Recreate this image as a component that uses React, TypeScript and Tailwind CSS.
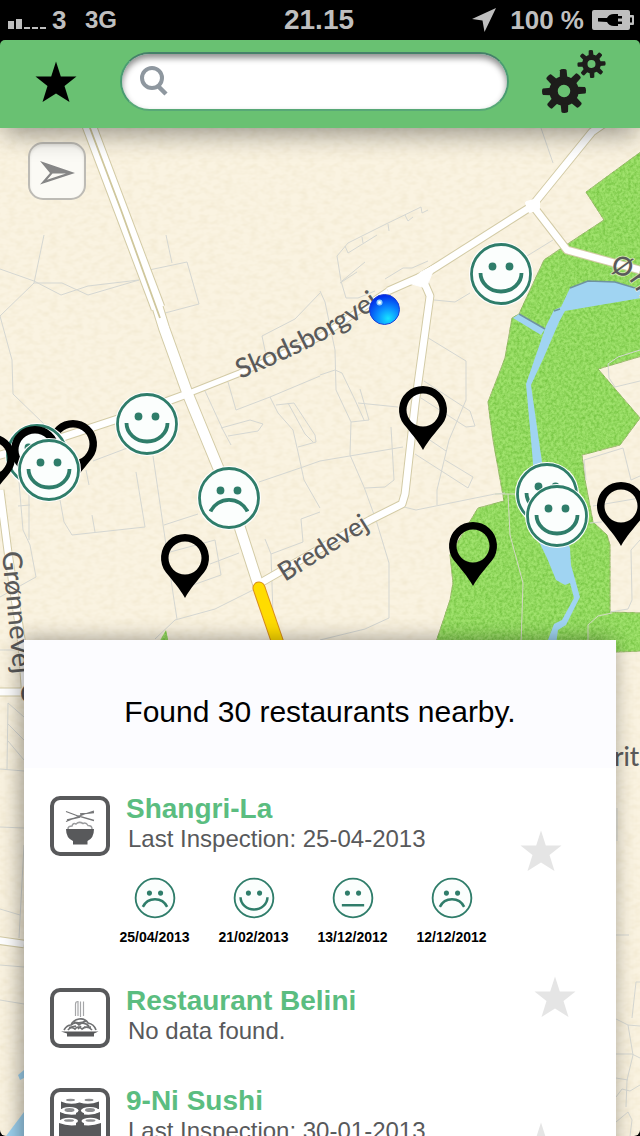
import React from "react";

type Mood = "happy" | "neutral" | "sad";
type Cuisine = "bowl" | "pasta" | "sushi";

interface Restaurant {
  name: string;
  note: string;
  cuisine: Cuisine;
  history: { mood: Mood; date: string }[];
}

const restaurants: Restaurant[] = [
  {
    name: "Shangri-La",
    note: "Last Inspection: 25-04-2013",
    cuisine: "bowl",
    history: [
      { mood: "sad", date: "25/04/2013" },
      { mood: "happy", date: "21/02/2013" },
      { mood: "neutral", date: "13/12/2012" },
      { mood: "sad", date: "12/12/2012" },
    ],
  },
  { name: "Restaurant Belini", note: "No data found.", cuisine: "pasta", history: [] },
  {
    name: "9-Ni Sushi",
    note: "Last Inspection: 30-01-2013",
    cuisine: "sushi",
    history: [{ mood: "happy", date: "30/01/2013" }],
  },
];

const mouths: Record<Mood, string> = {
  happy: "M-20.5 -1A20.5 18.5 0 0 0 20.5 -1",
  neutral: "M-17 11H17",
  sad: "M-18.5 13.5A20.5 20.5 0 0 1 18.5 13.5",
};

function Face({ mood }: { mood: Mood }) {
  return (
    <g>
      <circle r="32" fill="#fff" />
      <circle r="29.5" fill="#fbfefd" stroke="#2f7d6a" strokeWidth="2.800" />
      <circle cx="-8.500" cy="-7.500" r="3.900" fill="#2f7d6a" />
      <circle cx="8.500" cy="-7.500" r="3.900" fill="#2f7d6a" />
      <path d={mouths[mood]} fill="none" stroke="#2f7d6a" strokeWidth="3.800" />
    </g>
  );
}

function Pin() {
  return (
    <path
      fillRule="evenodd"
      d="M0 40C-5 31 -13 22 -19 14.600A24 24 0 1 1 19 14.600C13 22 5 31 0 40ZM0 -16.500A16.500 16.500 0 1 0 0 16.500A16.500 16.500 0 1 0 0 -16.500Z"
    />
  );
}

const markers: { x: number; y: number; kind: "pin" | Mood }[] = [
  { x: 73, y: 444, kind: "pin" },
  { x: 37, y: 455, kind: "happy" },
  { x: 35, y: 450, kind: "pin" },
  { x: -9, y: 458, kind: "pin" },
  { x: 49, y: 470, kind: "happy" },
  { x: 147, y: 424, kind: "happy" },
  { x: 229, y: 498, kind: "sad" },
  { x: 185, y: 558, kind: "pin" },
  { x: 423, y: 410, kind: "pin" },
  { x: 501, y: 274, kind: "happy" },
  { x: 473, y: 546, kind: "pin" },
  { x: 547, y: 494, kind: "happy" },
  { x: 557, y: 516, kind: "happy" },
  { x: 621, y: 506, kind: "pin" },
];

const paths =
  "M0 269L34 281L61 295L88 286L139 280M44 235L34 283L0 316L12 360L13 394L45 425M34 283L62 283L88 295L139 280M149 270L187 262L199 304L165 313M166 235L172 263M320 293L295 319L262 336L266 355M228 382L236 410L270 397L320 376M205 391L223 430L231 445M221 428L250 420L263 424L258 431L228 436M270 397L278 413L293 430L298 452L304 480L320 508M276 405L294 403L315 435L316 442L298 447M288 403L305 434L313 442M259 482L303 467L320 461L403 447M153 456L166 545L174 600L177 619M93 461L130 447M136 472L145 527L72 535L64 522L60 500M92 515L95 532M86 470L89 485M19 482L23 530L30 545L36 577L0 597M29 490V540M18 506L30 505M164 525L198 514M170 552L215 540L221 575L190 586M210 564L239 553M265 539L271 554L303 542L301 519L320 512M271 554L274 645M155 639L175 620L215 609L253 590M541 128L553 163M590 128L589 138" +
  "M342 281L365 262M428 261L412 268L403 268L385 279M340 283L357 272M320 291L325 302L335 350L336 390L351 422L350 455L364 487L376 520L389 563V618L365 629L320 640" +
  "M421 207L386 224L348 243L337 256L341 281L346 298L358 298L375 291M421 207L422 213L428 210M405 215L408 221L413 217M388 224L389 231M345 246L348 253L377 235M362 237L363 243" +
  "M320 375L335 370L342 373L355 400L364 420M360 389L369 420L351 422M358 403L398 407M434 300L455 302L470 293M527 256L553 240M425 336L466 361V400L449 440L437 490V505M424 381L450 398L470 411L475 426L466 427L421 398M415 430L446 451M415 454L468 488L473 477L445 460M391 427L394 480L385 487L365 488M404 507L416 510L495 494L505 493" +
  "M640 350L618 357L608 364L609 378L615 387L640 381M584 460L623 448L631 480L640 476M593 506L640 498M584 460L586 480M590 523L602 522M640 540L631 550L632 600L628 609L610 612" +
  "M0 650H24M8 703L24 717M8 703L7 770M8 724L24 740M8 741L24 760M0 769L24 771M0 827L24 828M0 909L20 915M0 965L24 967M0 1000L24 1004M24 845L19 938M616 935H629M640 982H636L632 1018M616 1019L628 1025L640 1026M628 1025L633 1055L627 1080L626 1107M616 1054H632L640 1058M616 1078L628 1080M616 1097L622 1089L630 1091L640 1085M616 1122L628 1112L632 1120L630 1136M617 808V841";

const mainRoadUpper = "M78 96L90 128L121 210L158 308";
const mainRoad = "M78 96L90 128L121 210L156 302L164 328L187 392L229 494L260 590";
const sideRoads =
  "M388 291L422 276L532 206L592 132L612 118M421 275L430 296L415 405L405 494L402 504L370 520L262 582M533 206L567 250L640 270M0 490L8 552L22 645L26 700M-5 692H24M-5 940L24 944M-10 458L60 438L130 415L187 394";
const narrowRoad = "M187 394L240 373L320 337L388 291";

function MapCanvas() {
  return (
    <svg
      className="absolute inset-0 h-full w-full"
      viewBox="0 128 640 1008"
      preserveAspectRatio="xMinYMin slice"
      role="group"
      aria-label="Map"
    >
      <defs>
        <filter id="paper" x="0" y="0" width="100%" height="100%">
          <feTurbulence type="fractalNoise" baseFrequency="0.12 0.2" numOctaves="2" seed="4" />
          <feColorMatrix values="0 0 0 0 0.6  0 0 0 0 0.48  0 0 0 0 0.22  0.26 0 0 0 -0.1" />
        </filter>
        <filter id="grass" x="0" y="0" width="100%" height="100%" colorInterpolationFilters="sRGB">
          <feTurbulence type="fractalNoise" baseFrequency="0.35" numOctaves="3" seed="9" />
          <feColorMatrix values="0 0 0 0 0.42  0 0 0 0 0.74  0 0 0 0 0.22  1.5 0 0 0 -0.5" />
          <feComposite in2="SourceAlpha" operator="in" result="specks" />
          <feMerge>
            <feMergeNode in="SourceGraphic" />
            <feMergeNode in="specks" />
          </feMerge>
        </filter>
        <radialGradient id="dot" cx="0.62" cy="0.8" r="0.8">
          <stop offset="0" stopColor="#16e4ff" />
          <stop offset="0.450" stopColor="#0a8dff" />
          <stop offset="1" stopColor="#0028e8" />
        </radialGradient>
        <path id="skodsborgvej" d="M240 379Q305 352 340 331T400 289" />
        <path id="bredevej" d="M285 582L382 521" />
        <path id="groennevej" d="M2 552L16 700" />
        <path id="oern" d="M610 272L626 277Q630 280 636 290L660 330" />
      </defs>

      <rect y="128" width="640" height="1008" fill="#faf3e1" />
      <rect y="128" width="640" height="1008" filter="url(#paper)" />

      <g filter="url(#grass)" fill="#9fe26c">
        <path
          stroke="#a9bb7c"
          d="M642 151L586 192L604 220L563 247L544 260L519 314L512 318L505 358L488 402L493 440L504 501L478 508L466 528L450 555L453 583L450 600L430 660L642 651V613L610 612V545L607 535L593 522L585 480L582 455L620 445L640 418L598 369L642 356Z"
        />
        <path d="M166 630L158 644H169Z" />
      </g>
      <path
        fill="#a0d4f2"
        d="M570 288L588 281L615 282L642 290V298L600 305L565 311L559 322L544 357L531 385L536 420L542 462L550 500L570 548L571 565L580 597L566 625L558 630L556 645H546L554 624L562 620L574 598L570 583L565 585L556 580L547 558L538 540L535 500L533 463L526 384L546 326L554 310L561 307ZM513 318L519 314L545 329L541 335ZM24 1112L6 1136H24ZM18 1075L24 1070V1078L20 1080Z"
      />
      <path
        d="M570 288L588 281L615 282L642 290M519 314L545 329M554 311L560 309"
        fill="none"
        stroke="#6f93a0"
        strokeWidth="1.500"
      />
      <path d={paths} fill="none" stroke="#d5d7d2" strokeWidth="1" />
      <path
        d="M495 494H520M508 494L510 535L523 583L521 645M588 645V625L598 616L612 613"
        fill="none"
        stroke="#d2d8c4"
        strokeWidth="1"
      />

      <g fill="none" strokeLinejoin="round">
        <path d={narrowRoad} stroke="#d3cba6" strokeWidth="7.500" />
        <path d={sideRoads} stroke="#d3cba6" strokeWidth="8.800" />
        <path d={mainRoad} stroke="#d3cba6" strokeWidth="12" />
        <path d={mainRoadUpper} stroke="#d3cba6" strokeWidth="15" />
        <path d={narrowRoad} stroke="#fff" strokeWidth="5.500" />
        <path d={sideRoads} stroke="#fff" strokeWidth="6.800" />
        <path d={mainRoad} stroke="#fff" strokeWidth="10" />
        <path d={mainRoadUpper} stroke="#fff" strokeWidth="13" />
        <path d="M78 96L90 128L121 210L160 318" stroke="#cfc79c" strokeWidth="1.800" />
        <path d="M527 203L538 200L538 208L530 211Z" fill="#fff" stroke="#fff" strokeWidth="4" />
        <path d="M408 283L421 272L436 264L426 288Z" fill="#fff" stroke="#fff" />
        <path d="M259 588L282 655" stroke="#d98e1c" strokeWidth="13" strokeLinecap="round" />
        <path d="M259 588L282 655" stroke="#ffdc00" strokeWidth="11" strokeLinecap="round" />
      </g>

      <g
        className="font-['Lato',sans-serif] text-[26px] font-medium"
        fill="#5a5a5a"
        stroke="#f9f2e0"
        strokeOpacity="0.6"
        strokeWidth="2"
        strokeLinejoin="round"
        paintOrder="stroke"
      >
        <text className="text-[27px]">
          <textPath href="#skodsborgvej">Skodsborgvej</textPath>
        </text>
        <text>
          <textPath href="#bredevej">Bredevej</textPath>
        </text>
        <text className="text-[27px]">
          <textPath href="#groennevej">Grønnevej</textPath>
        </text>
        <text>
          <textPath href="#oern">Ørn</textPath>
        </text>
        <text x="614" y="766">
          rit
        </text>
        <text x="20" y="703">
          C
        </text>
      </g>

      {markers.map((m, i) => (
        <g
          key={i}
          transform={`translate(${m.x} ${m.y})`}
          role="img"
          aria-label={m.kind === "pin" ? "Restaurant" : `Restaurant, ${m.kind}`}
        >
          {m.kind === "pin" ? <Pin /> : <Face mood={m.kind} />}
        </g>
      ))}

      <g role="img" aria-label="Your location">
        <circle cx="384.500" cy="309.500" r="15" fill="url(#dot)" stroke="#1d3fd6" strokeWidth="1" />
        <circle cx="379.500" cy="302.500" r="3" fill="#8fd0ff" />
        <circle cx="379.500" cy="302.500" r="1.500" fill="#fff" />
      </g>
    </svg>
  );
}

function Star({ className }: { className: string }) {
  return (
    <svg viewBox="0 0 42 42" className={className} aria-hidden="true">
      <path
        fill="currentColor"
        d="M21 .5L25.800 15.500H41.500L29.500 25L34.500 41L21 32.500L7.500 41L12.500 25L.5 15.500H16.200Z"
      />
    </svg>
  );
}

function Gear({ x, y, scale, turn }: { x: number; y: number; scale: number; turn: number }) {
  return (
    <g transform={`translate(${x} ${y}) rotate(${turn}) scale(${scale})`}>
      <circle r="10.500" fill="none" stroke="#1d1d1b" strokeWidth="8.500" />
      {[0, 45, 90, 135, 180, 225, 270, 315].map((a) => (
        <path key={a} transform={`rotate(${a})`} fill="#1d1d1b" d="M-3.800 -13L-3.300 -21Q-3 -22 0 -22T3.300 -21L3.800 -13Z" />
      ))}
    </g>
  );
}

function CuisineIcon({ kind }: { kind: Cuisine }) {
  return (
    <span className="flex size-[60px] shrink-0 items-center justify-center overflow-hidden rounded-[10px] border-4 border-[#58595b] bg-white">
      <svg viewBox="0 0 52 52" className="size-[52px]" fill="#58595b" aria-hidden="true">
        {kind === "bowl" && (
          <g>
            <path
              d="M12 11.500L24 16L40 20.500M40 11L28 15L12 21.500M26 14L40 12.500M13 20L26 17"
              fill="none"
              stroke="#77787a"
              strokeWidth="1.300"
            />
            <path
              d="M14 29Q14 26 18 26Q19 22.500 22 24Q25 21 29 23.500Q32 22 34 25.500Q38 25.500 38 29"
              fill="none"
              stroke="#9b9c9e"
              strokeWidth="1.500"
            />
            <path d="M12 29H40Q40 38 33.500 41V44.500H19V41Q12 38 12 29Z" />
          </g>
        )}
        {kind === "pasta" && (
          <g>
            <path
              d="M21.500 24V12Q21.500 9.500 24 9.500V24M26.500 9.500V25M29.500 9.500V24"
              fill="none"
              stroke="#a5a6a8"
              strokeWidth="1.200"
            />
            <path
              d="M10 38Q13 33 17 33Q19 28 25 27T34 31Q40 32 42 38M14 38Q17 34 21 37Q24 33 28 37Q33 33 38 38M17 33Q22 29 25 33Q29 29 35 34M20 30Q26 32 32 29M15 35.500L22 34M30 35L37 35M24 37L27 34"
              fill="none"
              stroke="#6f7072"
              strokeWidth="1.700"
            />
            <path d="M7 39.500H44.500L40 41.500V44.500H13V41.500Z" />
          </g>
        )}
        {kind === "sushi" && (
          <g>
            <path d="M7 9.500Q16 13.500 25.500 10.500Q35 13.500 45 9.500V17H7Z" />
            <path d="M6 20Q15 24.500 26 21.500Q37 24.500 46 20V28H6Z" />
            <path d="M5 31Q15 35 26 32.500Q37 35 47 31V45Q37 47 32 44H20Q15 47 5 45ZM22 14H30V40H22Z" />
            <g fill="#fff">
              <ellipse cx="16.500" cy="8" rx="8.500" ry="2.800" />
              <ellipse cx="35" cy="8" rx="8.500" ry="2.800" />
              <ellipse cx="15.500" cy="18.500" rx="9" ry="3.600" />
              <ellipse cx="36" cy="18.500" rx="9" ry="3.600" />
              <ellipse cx="15" cy="29" rx="9" ry="3.200" />
              <ellipse cx="36.500" cy="29" rx="9" ry="3.200" />
            </g>
            <g fill="#8c8d8f">
              <ellipse cx="16.500" cy="8" rx="4.500" ry="1.200" />
              <ellipse cx="35" cy="8" rx="4.500" ry="1.200" />
              <ellipse cx="15.500" cy="18" rx="5" ry="2" />
              <ellipse cx="36" cy="18" rx="5" ry="2" />
              <ellipse cx="15" cy="28.500" rx="5" ry="1.300" />
              <ellipse cx="36.500" cy="28.500" rx="5" ry="1.300" />
            </g>
          </g>
        )}
      </svg>
    </span>
  );
}

function StatusBar() {
  return (
    <div className="grid h-10 shrink-0 grid-cols-[1fr_auto_1fr] items-center bg-black pr-1.5 pl-2 font-bold text-[#bfbfbf]">
      <div className="flex items-center">
        <svg viewBox="0 0 38 10" className="mt-2 mr-1.5 h-[10px] w-[38px]" fill="currentColor" aria-label="Signal">
          <path d="M0 2H6V10H0ZM8 0H14V10H8ZM16 8H22V10H16ZM24 8H30V10H24ZM32 8H38V10H32Z" />
        </svg>
        <span className="w-[33px] text-[26px] leading-10">3</span>
        <span className="text-[24px] leading-10">3G</span>
      </div>
      <span className="pr-1 text-[28px] leading-10">21.15</span>
      <div className="flex items-center justify-end">
        <svg viewBox="0 0 24 24" className="mr-3.5 size-6" fill="currentColor" aria-label="Location in use">
          <path d="M24 0L12.500 24L10.500 12.500L0 11Z" />
        </svg>
        <span className="text-[26px] leading-10">100 %</span>
        <svg viewBox="0 0 42 20" className="ml-2 h-5 w-[42px]" aria-label="Charging">
          <path
            fill="currentColor"
            fillRule="evenodd"
            d="M2 0H36Q38 0 38 2V5H41Q42 5 42 6V14Q42 15 41 15H38V18Q38 20 36 20H2Q0 20 0 18V2Q0 0 2 0ZM38 7.500V12.500H40V7.500Z"
          />
          <path d="M6 8H15Q17 4 22 4H26V6H30V8.500H26V11.500H30V14H26V16H22Q17 16 15 12L6 11.500Z" />
        </svg>
      </div>
    </div>
  );
}

function Header() {
  return (
    <header className="relative z-10 flex h-[88px] shrink-0 items-center rounded-t-[5px] bg-[#69c172] shadow-[0_10px_26px_-4px_rgba(0,0,0,0.4)]">
      <button
        type="button"
        aria-label="Favourites"
        className="flex h-full w-[120px] shrink-0 items-center pl-[35px] text-black"
      >
        <Star className="-mt-1 size-[42px]" />
      </button>
      <label className="-mt-1.5 flex h-[59px] min-w-0 flex-1 items-center rounded-full border-2 border-[#4a9b72] border-t-[#458069] border-b-[#58a877] bg-white pl-[18px] shadow-[inset_0_4px_6px_rgba(0,0,0,0.45)]">
        <svg viewBox="0 0 28 30" className="h-[30px] w-7 shrink-0" fill="none" stroke="#8e979f" aria-hidden="true">
          <circle cx="12" cy="12" r="10" strokeWidth="4" />
          <path d="M18.500 20.500L26 28" strokeWidth="4.500" />
        </svg>
        <input
          type="search"
          aria-label="Search restaurants"
          className="h-full min-w-0 flex-1 bg-transparent px-3 text-[26px] outline-none"
        />
      </label>
      <button
        type="button"
        aria-label="Settings"
        className="flex h-full w-[131px] shrink-0 items-center justify-end pr-[34px]"
      >
        <svg viewBox="0 0 66 66" className="-mt-1 size-[66px]" aria-hidden="true">
          <Gear x={24} y={42} scale={1} turn={-2} />
          <Gear x={51.5} y={15} scale={0.64} turn={-3} />
        </svg>
      </button>
    </header>
  );
}

function RestaurantRow({ item }: { item: Restaurant }) {
  const inspected = item.history.length > 0;
  return (
    <li className="flex items-start pb-10">
      <div className="min-w-0 flex-1">
        <div className="flex items-start gap-4">
          <CuisineIcon kind={item.cuisine} />
          <div className="-mt-[3px]">
            <h2 className="text-[28px] leading-8 font-bold text-[#5bbd80]">{item.name}</h2>
            <p className="pl-0.5 text-[24px] leading-7 text-[#58595b]">{item.note}</p>
          </div>
        </div>
        {inspected && (
          <ol className="mt-[21px] flex pl-[55px]">
            {item.history.map((h) => (
              <li key={h.date} className="flex w-[99px] flex-col items-center gap-[7px]">
                <svg viewBox="-32 -32 64 64" className="size-[42px]" role="img" aria-label={h.mood}>
                  <Face mood={h.mood} />
                </svg>
                <time className="text-[14px] leading-[22px] font-bold text-black">{h.date}</time>
              </li>
            ))}
          </ol>
        )}
      </div>
      <button
        type="button"
        aria-label={`Add ${item.name} to favourites`}
        className={inspected ? "mt-[34px] mr-[54px] text-[#e5e5e5]" : "-mt-3 mr-10 text-[#e5e5e5]"}
      >
        <Star className="size-[42px]" />
      </button>
    </li>
  );
}

export default function App() {
  return (
    <div className="flex h-screen flex-col overflow-hidden bg-black font-['Liberation_Sans',Arial,sans-serif]">
      <StatusBar />
      <Header />
      <main className="relative min-h-0 flex-1 overflow-hidden rounded-b-[6px]">
        <MapCanvas />
        <button
          type="button"
          aria-label="Go to my location"
          className="absolute top-[14px] left-7 flex size-[58px] items-center justify-center rounded-[15px] border-2 border-[#bdbbb5] bg-[#fbfaf5] shadow-[inset_0_2px_3px_rgba(0,0,0,0.08)]"
        >
          <svg viewBox="0 0 36 24" className="mt-1 h-6 w-9" aria-hidden="true">
            <path
              fill="#868686"
              fillRule="evenodd"
              d="M1 0L36 12L1 23.500L11 12ZM13.500 12.500L8 18.800L27 12.500Z"
            />
          </svg>
        </button>
        <section className="relative mx-6 mt-[512px] min-h-full bg-white shadow-[-3px_0_20px_rgba(0,0,0,0.4)]">
          <h1 className="flex h-32 items-center justify-center bg-[#fcfcff] pt-4 text-[30px] leading-9 text-black">
            Found 30 restaurants nearby.
          </h1>
          <ul className="pt-7 pl-[26px]">
            {restaurants.map((r) => (
              <RestaurantRow key={r.name} item={r} />
            ))}
          </ul>
        </section>
      </main>
    </div>
  );
}
